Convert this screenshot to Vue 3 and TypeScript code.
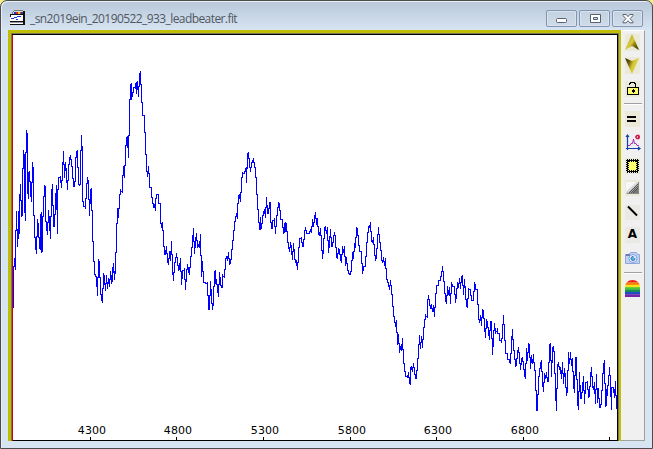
<script setup lang="ts">
type Point = [number, number]

const samples = `13,307 13,273 14,258 15,269 15,249 16,211 17,246 18,211 18,238 19,227 19,203 20,184 21,216 22,213 22,186 23,150 24,158 24,203 25,220 25,173 26,130 27,136 27,188 28,198 28,173 29,171 30,190 31,201 32,162 33,172 33,202 34,228 35,245 36,253 37,219 38,226 39,247 40,249 40,215 41,212 41,252 42,250 42,225 43,206 44,185 45,186 45,216 46,225 47,234 48,210 49,222 50,238 51,194 52,184 53,225 54,226 55,201 56,185 57,233 57,200 58,178 60,176 61,187 62,172 63,151 64,177 65,162 66,174 67,189 68,170 69,158 70,155 71,162 72,170 73,186 74,185 75,177 75,163 76,151 77,150 78,183 79,185 80,183 80,165 81,135 82,157 82,198 83,203 85,208 86,188 87,177 88,183 89,215 90,190 91,188 92,231 93,250 94,272 95,275 96,277 97,295 98,259 99,262 100,291 101,297 102,302 103,273 104,277 105,290 106,275 107,288 108,278 109,286 110,271 111,283 112,267 112,281 113,263 114,279 115,267 116,237 117,208 118,217 119,198 120,189 122,192 122,183 123,166 124,177 125,152 126,137 127,147 127,136 128,157 129,113 130,85 131,83 131,99 132,92 133,91 135,83 136,93 136,82 137,81 138,96 139,75 140,71 141,96 142,108 144,122 145,142 146,165 147,176 148,166 149,179 151,195 152,198 153,207 154,204 155,210 155,202 156,194 158,194 158,203 160,203 160,218 161,227 162,222 163,237 164,254 165,253 166,246 167,260 168,264 169,251 170,260 171,241 172,267 173,280 174,263 175,260 176,253 177,260 178,270 179,268 180,258 181,284 182,272 184,268 185,289 186,273 187,264 188,270 189,274 190,260 191,252 192,242 193,228 194,253 195,240 196,233 197,247 198,244 199,247 200,234 201,276 202,261 203,280 205,283 207,282 208,308 209,309 210,281 211,296 212,309 213,300 214,272 215,270 215,283 216,279 217,288 218,296 219,272 220,282 221,287 222,287 222,274 224,277 225,260 226,256 227,260 228,252 229,264 230,262 231,255 232,243 233,237 234,223 235,218 236,213 237,218 237,210 238,196 239,194 240,201 241,182 242,172 244,173 245,168 246,167 246,182 247,154 248,152 249,163 250,171 251,163 252,161 253,158 254,165 255,168 256,186 257,202 258,216 259,228 260,229 260,217 261,228 262,218 263,212 264,209 265,217 266,197 267,213 268,213 269,202 270,202 270,217 271,227 272,228 272,221 274,218 275,233 276,218 277,212 278,202 279,203 280,217 282,220 283,233 284,223 284,232 285,222 285,231 286,223 287,239 288,244 289,251 290,242 291,248 292,259 293,243 294,255 295,262 296,260 297,269 298,255 299,239 301,237 302,246 303,246 304,232 305,227 306,232 309,233 310,229 311,232 312,219 313,226 314,217 315,212 316,224 317,218 318,233 319,235 320,228 321,242 322,258 323,248 324,228 325,226 326,233 327,227 328,252 329,242 330,229 331,245 332,246 333,238 334,232 335,238 336,255 337,258 338,248 339,249 340,258 341,262 342,246 343,252 344,246 345,265 346,257 347,268 348,271 349,274 350,274 351,268 352,252 353,258 354,243 355,247 356,227 357,229 358,240 359,250 361,252 362,273 363,267 365,264 366,247 367,237 368,226 369,227 370,222 371,240 372,242 373,237 374,250 375,260 376,255 377,240 378,227 379,240 380,243 381,257 382,262 383,257 384,265 385,258 386,277 387,280 388,283 389,289 390,280 391,289 392,298 393,313 394,318 395,326 396,320 397,344 398,334 399,352 400,346 401,350 402,338 403,360 404,366 405,375 407,377 408,372 409,382 410,384 410,367 411,366 412,371 413,363 414,371 415,377 416,378 417,362 418,353 419,335 420,348 421,336 422,347 423,330 424,323 425,314 427,317 427,302 428,295 429,302 430,308 431,304 432,311 433,305 434,316 435,298 436,288 438,282 440,277 441,275 442,266 443,275 444,287 445,298 446,303 447,286 448,294 449,287 450,303 451,282 452,285 454,286 455,302 456,293 457,282 458,287 459,278 460,288 461,276 462,275 463,294 464,279 465,292 466,305 467,307 468,288 470,290 471,300 473,300 474,282 475,285 477,292 478,315 479,322 480,315 481,325 482,309 483,310 484,325 485,337 486,319 487,323 488,330 489,339 490,321 491,321 492,354 493,337 494,323 495,333 497,328 499,337 501,342 502,333 503,315 504,333 505,347 507,358 509,360 510,363 511,342 512,329 513,348 514,352 515,366 516,363 517,352 518,347 519,357 520,369 521,358 522,357 523,365 524,373 525,378 526,348 527,360 528,343 529,345 530,368 531,355 532,363 533,354 534,369 535,370 536,410 537,410 538,378 539,373 540,363 541,360 542,381 543,391 544,373 545,378 546,372 547,381 548,380 549,344 550,343 551,376 552,347 553,346 554,355 555,390 556,410 557,365 558,362 559,369 560,367 561,378 562,362 563,383 564,368 565,378 566,395 567,388 568,352 569,363 570,352 571,365 572,358 573,383 574,392 575,357 576,357 577,400 578,409 579,372 580,398 581,397 582,387 583,376 584,403 585,382 587,381 588,397 589,395 590,377 591,367 592,385 593,389 594,382 595,403 596,374 597,402 598,388 599,407 600,407 601,400 602,380 603,365 604,360 605,406 606,403 606,389 607,395 607,387 608,383 609,367 610,383 611,409 611,387 613,387 614,397 615,381 616,408`

const spectrum: Point[] = samples.split(' ').map((s) => s.split(',').map(Number) as Point)

// Each pixel column is filled from its lowest to its highest sample, and
// neighbouring columns meet halfway between their samples.
function columnPath(points: Point[]): string {
  const columns = new Map<number, Point>()
  const extend = (x: number, y: number) => {
    const c = columns.get(x)
    columns.set(x, c ? [Math.min(c[0], y), Math.max(c[1], y)] : [y, y])
  }
  points.forEach(([x, y], i) => {
    extend(x, y)
    if (i === 0) return
    const [px, py] = points[i - 1]
    const mid = Math.round((py + y) / 2)
    for (let cx = px; cx <= x; cx++) extend(cx, mid)
  })
  return [...columns].map(([x, [lo, hi]]) => `M${x} ${lo}h1V${hi + 1}h-1z`).join('')
}

const trace = columnPath(spectrum)

const ticks = [
  { x: 90, label: '4300' },
  { x: 176, label: '4800' },
  { x: 263, label: '5300' },
  { x: 350, label: '5800' },
  { x: 436, label: '6300' },
  { x: 523, label: '6800' },
  { x: 609, label: '' },
]

const bands = ['#ee2418', '#f97b12', '#f6e318', '#49c62c', '#168c58', '#2548c4', '#7424a8']
</script>

<template>
  <div class="desktop">
    <section class="window">
      <header class="titlebar">
        <svg class="app-icon" width="16" height="16" viewBox="0 0 16 16" shape-rendering="crispEdges">
          <path d="M3 1h10v5H3z" fill="#d8d8d8" />
          <path d="M4 0h9v1H4zM3 1h1v1H3zM2 2h1v2H2zM13 1h1v1h-1z" fill="#777" />
          <path d="M4 2h2v3H4z" fill="#1838d0" />
          <path d="M6 2h2v3H6z" fill="#e42020" />
          <path d="M8 2h2v3H8z" fill="#f0d820" />
          <path d="M10 2h1v3h-1z" fill="#d03030" />
          <path d="M11 2h2v2h-2z" fill="#2038b8" />
          <path d="M0 5h13v10H0z" fill="#fff" />
          <path d="M0 4h15v1H0zM0 5h1v2H0zM0 11h13v1H0zM0 14h15v1H0zM13 1h2v14h-2z" fill="#111" />
          <path d="M0 12h13v1H0z" fill="#999" />
          <path d="M1 8h3v1H1zM4 7h3v1H4zM7 6h4v1H7zM6 9h2v1H6z" fill="#1838e0" />
        </svg>
        <h1 class="title">_sn2019ein_20190522_933_leadbeater.fit</h1>
        <div class="controls">
          <button class="control" aria-label="Minimize">
            <svg width="14" height="10" viewBox="0 0 14 10"><rect x="1.5" y="4.5" width="10" height="4" rx="1" fill="#fff" stroke="#59606e" /></svg>
          </button>
          <button class="control" aria-label="Maximize">
            <svg width="14" height="10" viewBox="0 0 14 10"><path fill-rule="evenodd" d="M2.5.5h10v8h-10zM5.5 3.5v2h4v-2z" fill="#fff" stroke="#59606e" /></svg>
          </button>
          <button class="control" aria-label="Close">
            <svg width="14" height="10" viewBox="0 0 14 10"><path d="M2 .5h3.2L7 2.7 8.8.5H12v1.1L9 4.7l3 3v1.1H8.8L7 6.7 5.2 8.8H2V7.7l3-3-3-3.1z" fill="#fff" stroke="#59606e" /></svg>
          </button>
        </div>
      </header>

      <main class="content">
        <div class="frame">
          <svg class="plot" width="606" height="407" viewBox="12 34 606 407" shape-rendering="crispEdges">
            <path :d="trace" class="trace" />
            <path d="M12 34h606v1H12zM617 34h1v407h-1zM12 440h606v1H12z" />
            <rect v-for="t in ticks" :key="t.x" :x="t.x" y="437" width="1" height="3" />
            <text v-for="t in ticks" :key="t.label" :x="t.x + 2" y="434" class="tick-label">{{ t.label }}</text>
            <rect x="12" y="35" width="1" height="406" fill="#d00000" />
          </svg>
        </div>

        <nav class="toolbar">
          <svg class="tool up" width="15" height="17" viewBox="0 0 15 17">
            <defs>
              <linearGradient id="gold" x1="0" y1="0.2" x2="1" y2="1"><stop offset="0" stop-color="#a89c48" /><stop offset=".45" stop-color="#dccb38" /><stop offset=".62" stop-color="#8f8112" /><stop offset="1" stop-color="#292600" /></linearGradient>
              <linearGradient id="goldDown" x1="0" y1="0" x2="1" y2=".45"><stop offset="0" stop-color="#292600" /><stop offset=".35" stop-color="#6b600c" /><stop offset=".6" stop-color="#d2c22f" /><stop offset="1" stop-color="#eadc52" /></linearGradient>
            </defs>
            <path d="M0 0h15v17H0z" fill="#ebe9d8" /><path d="M7 0 0 16l7-4 7 4z" fill="url(#gold)" />
          </svg>
          <svg class="tool down" width="15" height="17" viewBox="0 0 15 17">
            <path d="M0 0h15v17H0z" fill="#ebe9d8" /><path d="M0 1l7 3 7-3-7 16z" fill="url(#goldDown)" />
          </svg>
          <svg class="tool lock" width="15" height="16" viewBox="0 0 15 16" shape-rendering="crispEdges">
            <path d="M0 0h15v16H0z" fill="#ebe9d8" />
            <path d="M3 7h10v6H3z" fill="#ffff70" />
            <path d="M3 6h10v1H3zM3 13h10v1H3zM2 6h1v8H2zM13 6h1v8h-1zM5 1h5v1H5zM4 2h2v1H4zM4 3h1v1H4zM9 2h2v1H9zM10 3h1v3h-1zM8 8h1v4H8zM7 9h3v2H7z" fill="#000" />
          </svg>
          <span class="rule rule-top" />
          <svg class="tool equals" width="15" height="16" viewBox="0 0 15 16" shape-rendering="crispEdges">
            <path d="M0 0h15v16H0z" fill="#ebe9d8" /><path d="M2 5h9v2H2zM2 9h9v2H2z" />
          </svg>
          <svg class="tool graph" width="16" height="17" viewBox="0 0 16 17">
            <path d="M2.5 1v15M1 14.5h14M1 3l1.5-2L4 3M13 13l2 1.5-2 1.5" stroke="#153fa8" stroke-width="1.2" fill="none" />
            <path d="M3 11.5h2l1-2 1.5 0L8.500 5l1 4.500 1.500 0 1 2h2" stroke="#a32cb8" fill="none" />
            <path d="M14.500 1.500h-2.500l-1 1v1l1 1h2.500M13 3h2" stroke="#d01048" stroke-width="1.500" fill="none" />
          </svg>
          <svg class="tool marquee" width="15" height="16" viewBox="0 0 15 16" shape-rendering="crispEdges">
            <path d="M0 0h15v16H0z" fill="#ebe9d8" /><path d="M2 2h11v12H2z" fill="#ffff70" />
            <rect x="2.500" y="2.500" width="10" height="11" fill="none" stroke="#000" />
            <path d="M1.500 2v12M13.500 2v12M2 1.500h11M2 14.500h11M3.500 3v10M11.500 3v10" fill="none" stroke="#000" stroke-dasharray="1 1" />
            <path d="M4 3.500h8M4 12.500h8" fill="none" stroke="#000" stroke-dasharray="1 1" />
          </svg>
          <svg class="tool dither" width="15" height="16" viewBox="0 0 15 16" shape-rendering="crispEdges">
            <defs>
              <linearGradient id="shade" x1="0" y1="0" x2="1" y2="1"><stop offset=".35" stop-color="#f8f8f8" /><stop offset=".55" stop-color="#bbb" /><stop offset=".75" stop-color="#777" /></linearGradient>
              <pattern id="grain" width="2" height="2" patternUnits="userSpaceOnUse"><path d="M0 0h1v1H0zM1 1h1v1H1z" fill="#555" /></pattern>
            </defs>
            <path d="M0 0h15v16H0z" fill="#ebe9d8" /><path d="M1 2h13v12H1z" fill="url(#shade)" /><path d="M2 13 13 3v6L8 13z" fill="url(#grain)" /><path d="M1.500 13.500h12V2" fill="none" stroke="#888" />
          </svg>
          <svg class="tool line" width="15" height="15" viewBox="0 0 15 15"><path d="M0 0h15v15H0z" fill="#eae9e6" /><path d="M3 1.500l9 9" stroke="#000" stroke-width="2" /></svg>
          <svg class="tool letter" width="15" height="16" viewBox="0 0 15 16"><path d="M0 0h15v16H0z" fill="#eae9e6" /><text x="7.500" y="11" class="letter-text">A</text></svg>
          <svg class="tool camera" width="15" height="14" viewBox="0 0 15 14">
            <path d="M.5 3.500h3.500l1.500-2h6l1 2h2v9H.5z" fill="#bfd2f4" stroke="#93a6dc" /><path d="M1 3h4v2H1z" fill="#7172bd" />
            <circle cx="8" cy="7.500" r="4" fill="#eef8ff" stroke="#7ba2de" /><circle cx="8" cy="7.500" r="2" fill="#45bce8" stroke="#3f68b8" /><path d="M8 5.500h2v2z" fill="#fff" />
          </svg>
          <span class="rule rule-bottom" />
          <svg class="tool rainbow" width="15" height="17" viewBox="0 0 15 17">
            <defs><clipPath id="dome"><path d="M0 17V8C0 3 3 0 7.500 0S15 3 15 8v9z" /></clipPath></defs>
            <g clip-path="url(#dome)"><rect v-for="(c, i) in bands" :key="c" x="0" :y="i * 2.4" width="15" height="2.600" :fill="c" /></g>
          </svg>
        </nav>
      </main>
    </section>
  </div>
</template>

<style>
body { margin: 0; overflow: hidden; }
</style>

<style scoped>
.desktop { width: 653px; height: 449px; background: #f5ee87; }
.window {
  box-sizing: border-box; width: 653px; height: 449px; padding: 0 7px 7px;
  border: 1px solid #4c4c4e; border-radius: 7px 7px 0 0;
  background: linear-gradient(#b8c8d9 0, #c4d3e3 12px, #d7e4f2 29px);
  box-shadow: inset 1px 1px 0 #e8eff6;
}
.titlebar { display: flex; align-items: flex-start; height: 29px; }
.app-icon { margin: 9px 0 0 2px; }
.title {
  margin: 9px 0 0 4px; height: 17px; font: 12px/17px "Open Sans", "Noto Sans", sans-serif;
  color: #50565f; letter-spacing: -0.58px; white-space: nowrap;
}
.controls { display: flex; gap: 2px; margin: 9px 2px 0 auto; }
.control {
  box-sizing: border-box; display: grid; place-items: center; width: 31px; height: 17px; padding: 0;
  border: 1px solid #8495b1; border-radius: 2px; background: linear-gradient(#c4d2e1, #cfdbe9);
  box-shadow: inset 0 0 0 1px #d8e3ee;
}
.content { display: flex; height: 411px; }
.frame {
  box-sizing: border-box; width: 613px; height: 411px; padding: 1px 1px 0;
  border: solid #c1bd00; border-width: 3px 2px 0 3px; background: #77775e;
}
.plot { display: block; background: #fff; }
.trace { fill: #0000ff; }
.tick-label { font: 11px "DejaVu Sans", sans-serif; letter-spacing: 0.1px; text-anchor: middle; }
.toolbar {
  box-sizing: border-box; display: flex; flex-direction: column; align-items: flex-start;
  width: 24px; height: 411px; padding: 3px 0 0 4px; border-top: 1px solid #fff;
  border-right: 1px solid #a0a0a0; border-bottom: 1px solid #a0a0a0; background: #f0f0f0;
}
.tool { flex: none; display: block; }
.down { margin-top: 6px; }
.lock { margin-top: 7px; }
.rule { flex: none; width: 18px; height: 1px; margin-left: -1px; background: #a0a0a0; box-shadow: 0 1px 0 #fff; }
.rule-top { margin-top: 6px; }
.equals { margin-top: 7px; }
.graph { margin-top: 7px; }
.marquee { margin-top: 7px; }
.dither { margin-top: 6px; }
.line { margin-top: 9px; }
.letter { margin-top: 7px; }
.letter-text { font: bold 12px "DejaVu Sans", sans-serif; text-anchor: middle; }
.camera { margin-top: 8px; }
.rule-bottom { margin-top: 7px; }
.rainbow { margin-top: 7px; }
</style>
